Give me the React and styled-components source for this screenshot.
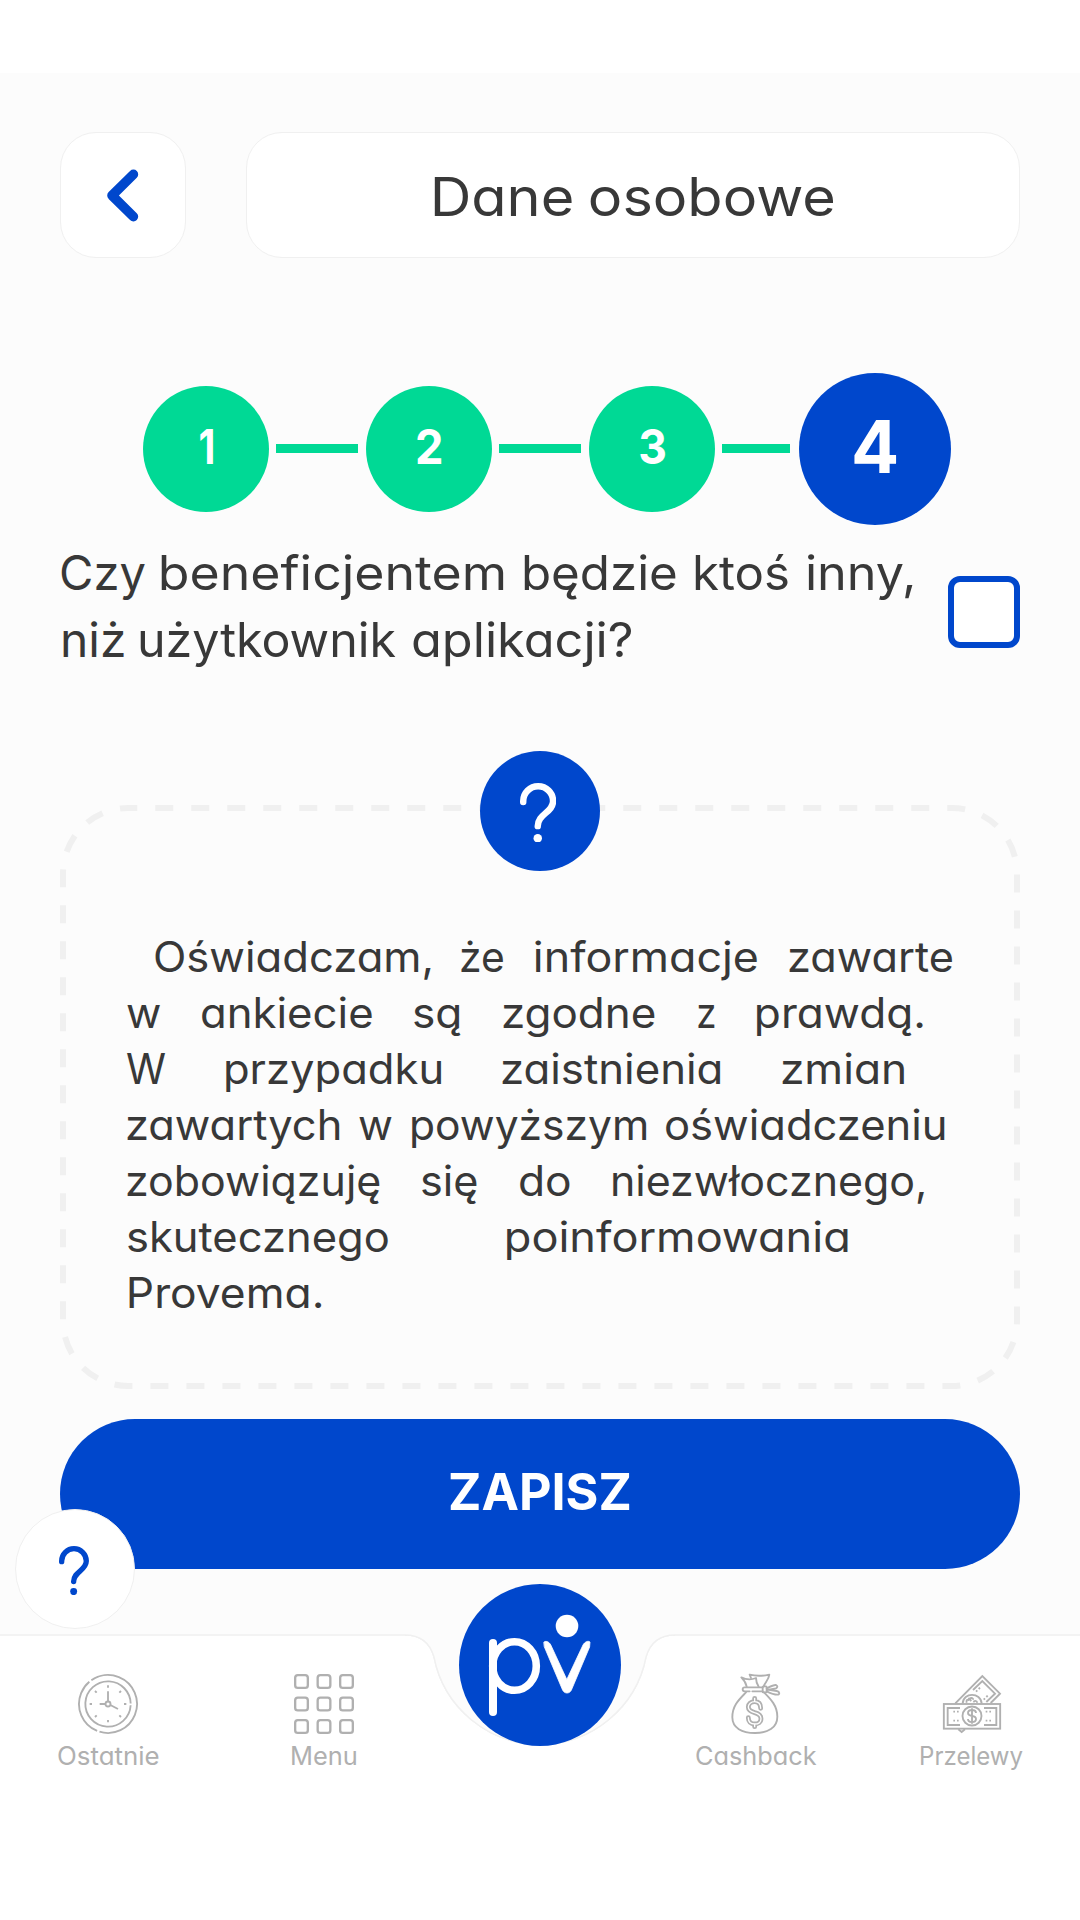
import React, { useLayoutEffect, useRef, useState } from 'react';
import styled, { createGlobalStyle } from 'styled-components';

const BLUE = '#0047cc';
const GREEN = '#00d995';
const INK = '#383838';
const LINE = '#f0f0f0';
const MUTED = '#b0b0b0';
const FONT = 'Inter, "Open Sans", sans-serif';

const GlobalStyle = createGlobalStyle`
  * { box-sizing: border-box; }
  body {
    margin: 0;
    background: #fff;
    color: ${INK};
    font-family: ${FONT};
    font-feature-settings: "cv11";
  }
`;

/* ---------- text ---------- */

const WordBox = styled.span`
  display: block;
  flex: none;
  width: ${(p) => p.$width}px;
  margin-left: ${(p) => p.$gap || 0}px;
  white-space: nowrap;
`;

const WordInk = styled.span`
  display: inline-block;
  transform-origin: 0 50%;
`;

/* Stretches a word so that its drawn glyphs span exactly `width`. */
function Word({ children, width, gap }) {
  const ref = useRef(null);
  const [fit, setFit] = useState({ scale: 1, shift: 0 });

  useLayoutEffect(() => {
    const el = ref.current;
    const css = getComputedStyle(el);
    const ctx = document.createElement('canvas').getContext('2d');
    ctx.font = `${css.fontWeight} ${css.fontSize} ${css.fontFamily}`;
    const m = ctx.measureText(children);
    const left = -m.actualBoundingBoxLeft;
    const right = m.width - m.actualBoundingBoxRight;
    el.style.transform = 'none';
    const ink = el.getBoundingClientRect().width - left - right;
    const scale = width / ink;
    el.style.transform = `translateX(${-left * scale}px) scaleX(${scale})`;
    setFit({ scale, shift: -left * scale });
  }, [children, width]);

  return (
    <WordBox $width={width} $gap={gap}>
      <WordInk ref={ref} style={{ transform: `translateX(${fit.shift}px) scaleX(${fit.scale})` }}>
        {children}
      </WordInk>
    </WordBox>
  );
}

const Line = styled.div`
  display: flex;
  height: ${(p) => p.$height}px;
  line-height: ${(p) => p.$height}px;
`;

/* Each word is [text, left edge, right edge] measured from the page's left side. */
function TextLine({ words, origin, height }) {
  let cursor = origin;
  return (
    <Line $height={height}>
      {words.map(([text, from, to]) => {
        const gap = from - cursor;
        cursor = to;
        return (
          <React.Fragment key={text}>
            <Word gap={gap} width={to - from}>{text}</Word>{' '}
          </React.Fragment>
        );
      })}
    </Line>
  );
}

/* ---------- page ---------- */

const Page = styled.div`
  width: 1080px;
  height: 1920px;
  padding-top: 73px;
  overflow: hidden;
  display: flex;
  flex-direction: column;
  background: #fff;
`;

const Screen = styled.main`
  flex: none;
  height: 1562px;
  padding: 59px 60px 0;
  background: #fcfcfc;
`;

const Header = styled.header`
  display: flex;
  gap: 60px;
  height: 126px;
`;

const Tile = styled.div`
  display: flex;
  align-items: center;
  justify-content: center;
  background: #fff;
  border: 1px solid ${LINE};
  border-radius: 36px;
`;

const BackButton = styled(Tile).attrs({ as: 'button' })`
  width: 126px;
  padding: 0;
`;

const TitleBox = styled(Tile)`
  flex: 1;
  font-size: 53px;
  line-height: 64px;
  padding: 3px 0 0 2px;
`;

const Title = styled.h1`
  margin: 0;
  display: flex;
  font: inherit;
`;

const Steps = styled.div`
  display: flex;
  align-items: center;
  height: 152px;
  margin: 115px 0 0 83px;
`;

const Step = styled.div`
  display: flex;
  align-items: center;
  justify-content: center;
  flex: none;
  width: ${(p) => (p.$active ? 152 : 126)}px;
  height: ${(p) => (p.$active ? 152 : 126)}px;
  padding-bottom: ${(p) => (p.$active ? 6 : 5)}px;
  border-radius: 50%;
  background: ${(p) => (p.$active ? BLUE : GREEN)};
  color: #fff;
  font-size: ${(p) => (p.$active ? 73 : 48)}px;
  line-height: 1;
  font-weight: 700;
`;

const StepLink = styled.div`
  flex: none;
  width: ${(p) => p.$width}px;
  height: 9px;
  margin: 0 ${(p) => p.$after}px 2px 7px;
  background: ${GREEN};
`;

const Question = styled.label`
  display: flex;
  justify-content: space-between;
  margin-top: 14px;
  font-size: 48px;
`;

const Checkbox = styled.span`
  width: 72px;
  height: 72px;
  margin-top: 37px;
  border: 6px solid ${BLUE};
  border-radius: 12px;
  background: #fff;
`;

const Card = styled.section`
  position: relative;
  height: 584px;
  margin-top: 132px;
  padding: 124px 63px 0 66px;
  font-size: 42px;
`;

const DashedFrame = styled.svg`
  position: absolute;
  inset: 0;
`;

const RoundBadge = styled.div`
  position: absolute;
  top: -54px;
  left: 420px;
  width: 120px;
  height: 120px;
  display: flex;
  align-items: center;
  justify-content: center;
  padding: 3px 4px 0 0;
  border-radius: 50%;
  background: ${BLUE};
  color: #fff;
`;

const SaveButton = styled.button`
  display: flex;
  align-items: center;
  justify-content: center;
  width: 960px;
  height: 150px;
  margin-top: 30px;
  padding: 0 0 5px;
  border: 0;
  border-radius: 75px;
  background: ${BLUE};
  color: #fff;
  font-family: inherit;
  font-feature-settings: inherit;
  font-size: 51px;
  font-weight: 700;
  text-align: left;
`;

const HelpButton = styled.button`
  position: absolute;
  left: 15px;
  top: 1509px;
  width: 120px;
  height: 120px;
  display: flex;
  align-items: center;
  justify-content: center;
  padding: 3px 2px 0 0;
  border: 1px solid ${LINE};
  border-radius: 50%;
  background: #fff;
  color: ${BLUE};
`;

const Nav = styled.nav`
  position: relative;
  flex: 1;
  display: grid;
  grid-template-columns: repeat(5, 216px);
`;

const NavShape = styled.svg`
  position: absolute;
  left: 0;
  top: -2px;
`;

const NavItem = styled.a`
  position: relative;
  display: flex;
  flex-direction: column;
  align-items: center;
  gap: 7px;
  padding-top: 39px;
  color: ${MUTED};
  font-size: 25px;
  line-height: 30px;
`;

const LogoButton = styled.div`
  position: absolute;
  left: 459px;
  top: -51px;
  width: 162px;
  height: 162px;
  border-radius: 50%;
  background: ${BLUE};
`;

/* ---------- icons ---------- */

const QuestionMark = ({ width }) => (
  <svg width={width} height={(width * 148) / 91} viewBox="177 437 91 148" fill="none" stroke="currentColor" strokeWidth="16" strokeLinecap="round">
    <path d="M185 484V482A37 37 0 0 1 259 482C259 510 221 514 221 544" />
    <circle cx="221" cy="574" r="10.5" fill="currentColor" stroke="none" />
  </svg>
);

const ChevronIcon = () => (
  <svg width="34" height="54" viewBox="0 0 34 54" fill="none" stroke={BLUE} strokeWidth="9.6" strokeLinejoin="round" strokeLinecap="round">
    <path d="M27.4 6.4L6 27.5L27.4 48.6" />
  </svg>
);

const IconSvg = styled.svg.attrs((p) => ({
  width: 60,
  height: 60,
  viewBox: '0 0 180 180',
  fill: 'none',
  stroke: 'currentColor',
  strokeWidth: p.$stroke || 5.6,
}))`
  display: block;
  overflow: visible;
`;

const ClockIcon = () => (
  <IconSvg>
    <circle cx="90" cy="90" r="87" pathLength="360" strokeDasharray="118 5 232 5" transform="rotate(112 90 90)" />
    <circle cx="90" cy="90" r="68" pathLength="360" strokeDasharray="354 6" transform="rotate(3 90 90)" />
    <circle cx="90" cy="90" r="7.5" />
    <path d="M90 82V52M82 90H65M97 93L120 105" />
    <path d="M90 34V41M90 138V145M35 90H42M138 90H145M51 51L56 56M124 56L129 51M51 129L56 124M124 124L129 129" />
  </IconSvg>
);

const MenuIcon = () => (
  <IconSvg $stroke={7}>
    {[0, 67.5, 135].map((y) =>
      [0, 67.5, 135].map((x) => <rect key={`${x}-${y}`} x={x + 3.5} y={y + 3.5} width="38" height="38" rx="8" />)
    )}
  </IconSvg>
);

const BagIcon = () => (
  <IconSvg strokeLinecap="round" strokeLinejoin="round">
    <path d="M60 55C40 76 19 94 19 130C19 162 48 177 87 177C125 177 154 162 154 128C154 95 134 75 114 55" />
    <path d="M110 40H56C48 40 48 52 56 52H71M79 52H110" />
    <rect x="110" y="37" width="12" height="18" rx="2" />
    <path d="M122 43C132 38 142 32 150 33C156 36 155 40 150 43L124 48M124 47L152 51C162 53 162 62 154 62C143 62 132 57 122 52" />
    <path d="M62 38C60 26 52 16 46 10C60 17 75 18 90 12C90 22 93 30 98 38" />
    <path d="M75 12L71 2C91 7 111 6 130 2C128 18 117 25 113 37" />
    <path d="M104 103C104 88 97 83 86 83C75 83 67 90 67 99C67 110 76 113 86 116C97 119 105 123 105 134C105 145 97 150 86 150C74 150 67 143 67 131M86 73V83M86 150V158" strokeWidth="14.5" />
    <path d="M104 103C104 88 97 83 86 83C75 83 67 90 67 99C67 110 76 113 86 116C97 119 105 123 105 134C105 145 97 150 86 150C74 150 67 143 67 131M86 73V83M86 150V158" stroke="#fff" strokeWidth="4" />
  </IconSvg>
);

const BillsIcon = () => (
  <IconSvg>
    <rect x="5.5" y="90" width="169" height="74" />
    <path d="M54 102H17V153H54M126 102H163V153H126" />
    <circle cx="90" cy="126" r="28.5" />
    <path d="M102 117C102 111 97 108 90 108C83 108 78 111 78 117C78 124 84 125 90 126C97 127 102 129 102 135C102 141 97 144 90 144C83 144 78 141 78 135M90 103V149" />
    <path d="M34 113H39M45 113H50M34 140H39M45 140H50M131 113H136M142 113H147M131 140H136M142 140H147" />
    <path d="M40 88L121 6L174 59L146 87" />
    <path d="M93 48L121 21L159 59L133 84" />
    <path d="M62 88C64 54 116 54 119 88M74 86C72 78 76 75 82 79M79 72L88 81M84 74C88 70 94 73 93 77M95 85C96 79 104 79 106 86" />
    <path d="M102 53L106 49M110 45L114 41M125 77L129 73M133 69L137 65" />
    <path d="M49 166L59 174L69 166" />
  </IconSvg>
);

const LogoMark = () => (
  <svg width="162" height="162" viewBox="459 1584 162 162" fill="none" stroke="#fff" strokeWidth="7.6" strokeLinecap="round" strokeLinejoin="round">
    <path d="M493 1643V1712" strokeWidth="8" />
    <ellipse cx="514.5" cy="1666" rx="21.8" ry="24.3" />
    <path d="M544 1642C545.6 1640.5 549 1641.5 550.8 1645L566.8 1679.5L583 1645C585 1641.5 588.4 1640.5 590 1642L589.6 1647L571.4 1690C569.6 1694 564.4 1694 562.6 1690L544.4 1647Z" fill="#fff" stroke="#fff" strokeWidth="0.8" />
    <circle cx="567" cy="1626" r="11.3" fill="#fff" stroke="none" />
  </svg>
);

/* ---------- content ---------- */

const QUESTION = [
  [['Czy', 61, 145], ['beneficjentem', 161.3, 504], ['będzie', 524.2, 676], ['ktoś', 695, 787.6], ['inny,', 806.6, 912]],
  [['niż', 62.6, 123.5], ['użytkownik', 140.3, 395.9], ['aplikacji?', 413, 632]],
];

const STATEMENT = [
  [['Oświadczam,', 155.2, 431.1], ['że', 461.4, 503.8], ['informacje', 535.3, 757.7], ['zawarte', 789.3, 952.7]],
  [['w', 126.9, 159.8], ['ankiecie', 200.7, 371.8], ['są', 413.9, 460.6], ['zgodne', 503.5, 655.3], ['z', 697.7, 714.3], ['prawdą.', 757.3, 923]],
  [['W', 127.2, 165.9], ['przypadku', 226.5, 441.8], ['zaistnienia', 502.3, 721], ['zmian', 781.7, 904]],
  [['zawartych', 126.7, 339.1], ['w', 358.9, 391.4], ['powyższym', 412, 646.5], ['oświadczeniu', 666.3, 945]],
  [['zobowiązuję', 126.7, 379.5], ['się', 422, 476.9], ['do', 519.6, 570], ['niezwłocznego,', 613, 924.3]],
  [['skutecznego', 127.6, 388.2], ['poinformowania', 507.5, 848.5]],
  [['Provema.', 128.8, 321]],
];

const NAV = [
  { label: 'Ostatnie', width: 101, Icon: ClockIcon },
  { label: 'Menu', width: 64, Icon: MenuIcon },
  null,
  { label: 'Cashback', width: 121, Icon: BagIcon },
  { label: 'Przelewy', width: 102, Icon: BillsIcon },
];

export default function App() {
  return (
    <Page>
      <GlobalStyle />
      <Screen>
        <Header>
          <BackButton aria-label="Wstecz"><ChevronIcon /></BackButton>
          <TitleBox>
            <Title><Word width={138.3}>Dane</Word>{' '}<Word gap={17.3} width={243.8}>osobowe</Word></Title>
          </TitleBox>
        </Header>

        <Steps>
          <Step><Word width={13}>1</Word></Step>
          <StepLink $width={82} $after={8} />
          <Step><Word width={24.5}>2</Word></Step>
          <StepLink $width={82} $after={8} />
          <Step><Word width={25}>3</Word></Step>
          <StepLink $width={68} $after={9} />
          <Step $active><Word width={43}>4</Word></Step>
        </Steps>

        <Question>
          <div>
            {QUESTION.map((words) => <TextLine key={words[0][0]} words={words} origin={60} height={67} />)}
          </div>
          <Checkbox role="checkbox" aria-checked="false" />
        </Question>

        <Card>
          <DashedFrame width="960" height="584" fill="none" stroke={LINE} strokeWidth="6">
            <rect x="3" y="3" width="954" height="578" rx="65.25" strokeDasharray="18 18" strokeDashoffset="9" />
          </DashedFrame>
          <RoundBadge><QuestionMark width={36.7} /></RoundBadge>
          {STATEMENT.map((words) => <TextLine key={words[0][0] + words.length} words={words} origin={126} height={56} />)}
        </Card>

        <SaveButton><Word width={180}>ZAPISZ</Word></SaveButton>
      </Screen>

      <Nav>
        <NavShape width="1080" height="287" viewBox="0 1633 1080 287">
          <path
            d="M-4 1635H405C421 1635 430 1643 434 1657A108 108 0 0 0 646 1657C650 1643 659 1635 675 1635H1084V1930H-4Z"
            fill="#fff"
            stroke={LINE}
            strokeWidth="1.4"
          />
          <path d="M434 1657C430 1643 421 1635 405 1635V1632H675V1635C659 1635 650 1643 646 1657A108 108 0 0 1 434 1657Z" fill="#fcfcfc" />
          <path d="M405 1635C421 1635 430 1643 434 1657A108 108 0 0 0 646 1657C650 1643 659 1635 675 1635" fill="none" stroke={LINE} strokeWidth="1.4" />
        </NavShape>
        {NAV.map((item) =>
          item ? (
            <NavItem key={item.label}>
              <item.Icon />
              <Word width={item.width}>{item.label}</Word>
            </NavItem>
          ) : (
            <span key="logo" />
          )
        )}
        <LogoButton><LogoMark /></LogoButton>
      </Nav>

      <HelpButton aria-label="Pomoc"><QuestionMark width={30.3} /></HelpButton>
    </Page>
  );
}
